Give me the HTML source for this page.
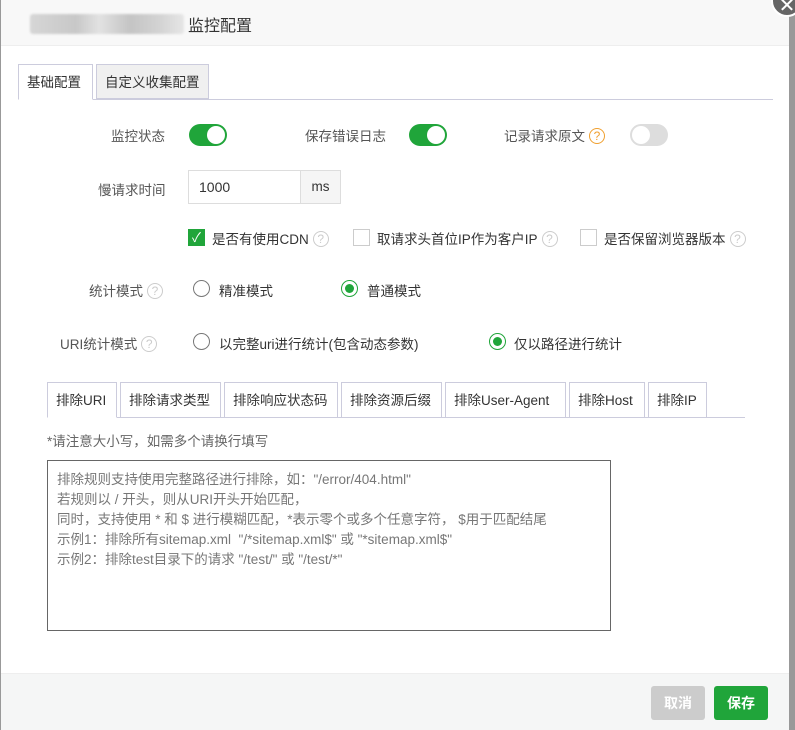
<!DOCTYPE html>
<html><head><meta charset="utf-8"><style>
*{box-sizing:border-box;margin:0;padding:0}
body{width:795px;height:730px;overflow:hidden;background:#999;font-family:"Liberation Sans","Noto Sans CJK SC",sans-serif;font-size:13.5px;color:#555;position:relative}
.dlg{position:absolute;left:1px;top:0;width:788px;height:730px;background:#fff}
.hd{height:46px;background:#f8f8f8;border-bottom:1px solid #eee;position:relative}
.blur{position:absolute;left:29px;top:14px;width:154px;height:20px;background:linear-gradient(90deg,#d6d6d6,#c8c8c8 30%,#e2e2e2 45%,#c4c4c4 65%,#d4d4d4 85%,#e6e6e6);filter:blur(1px);border-radius:3px}
.hd .t{position:absolute;left:187px;top:12px;font-size:16px;color:#333}
.close{position:absolute;left:771px;top:-15px;width:32px;height:32px;border-radius:50%;background:#666;border:2px solid #fff;color:#fff;font-size:20px;text-align:center;line-height:38px}
.a{position:absolute;white-space:nowrap}
.tab1{position:absolute;top:64px;height:36px;border:1px solid #ccd;padding:0 8px;line-height:36px;font-size:13.5px;color:#333}
.sw{position:absolute;width:38px;height:22px;border-radius:11px;background:#20a53a}
.sw::after{content:"";position:absolute;top:2px;right:2px;width:18px;height:18px;border-radius:50%;background:#fff}
.sw.off{background:#ddd}.sw.off::after{left:2px;right:auto}
.q{display:inline-block;width:16px;height:16px;border:1px solid #ccc;border-radius:50%;font-size:12px;line-height:14px;text-align:center;color:#ccc;vertical-align:middle;margin-left:4px;margin-top:-3px}
.cb{position:absolute;width:17px;height:17px;border:1px solid #ccc;background:#fff}
.cb.on{background:#20a53a;border-color:#20a53a;color:#fff;font-size:13px;line-height:15px;text-align:center}
.rd{position:absolute;width:17px;height:17px;border:1px solid #777;border-radius:50%}
.rd.on{border-color:#20a53a}.rd.on::after{content:"";position:absolute;left:3px;top:3px;width:9px;height:9px;border-radius:50%;background:#20a53a}
.t2{position:absolute;top:382px;height:36px;border:1px solid #ccd;line-height:36px;padding:0 8px;color:#333;font-size:13.5px;background:#fff}
.ft{position:absolute;left:0;top:673px;width:788px;height:57px;background:#f5f6f6;border-top:1px solid #eee}
.btn{position:absolute;top:686px;height:34px;border-radius:3px;color:#fff;font-weight:bold;font-size:14px;line-height:34px;text-align:center}
</style></head><body>
<div class="dlg">
<div class="hd"><div class="blur"></div><div class="t">监控配置</div></div>
<div style="position:absolute;left:17px;top:99px;width:755px;height:1px;background:#ccd"></div>
<div class="tab1" style="left:17px;width:75px;border-bottom-color:#fff;background:#fff">基础配置</div>
<div class="tab1" style="left:95px;width:113px;background:#f0f0f0;height:35px">自定义收集配置</div>

<div class="a" style="left:110px;top:125px">监控状态</div>
<div class="sw" style="left:188px;top:124px"></div>
<div class="a" style="left:304px;top:125px">保存错误日志</div>
<div class="sw" style="left:408px;top:124px"></div>
<div class="a" style="left:503px;top:125px">记录请求原文<span class="q" style="border-color:#f0a030;color:#f0a030">?</span></div>
<div class="sw off" style="left:629px;top:124px"></div>

<div class="a" style="left:97px;top:179px">慢请求时间</div>
<div style="position:absolute;left:187px;top:170px;width:113px;height:34px;border:1px solid #ddd;padding:8px 10px;color:#333;font-size:14px">1000</div>
<div style="position:absolute;left:299px;top:170px;width:41px;height:34px;border:1px solid #ddd;background:#f5f5f5;text-align:center;line-height:32px;color:#333">ms</div>

<div class="cb on" style="left:187px;top:229px">✓</div>
<div class="a" style="left:211px;top:228px;color:#333">是否有使用CDN<span class="q">?</span></div>
<div class="cb" style="left:352px;top:229px"></div>
<div class="a" style="left:376px;top:228px;color:#333">取请求头首位IP作为客户IP<span class="q">?</span></div>
<div class="cb" style="left:579px;top:229px"></div>
<div class="a" style="left:603px;top:228px;color:#333">是否保留浏览器版本<span class="q">?</span></div>

<div class="a" style="left:88px;top:280px">统计模式<span class="q">?</span></div>
<div class="rd" style="left:192px;top:280px"></div>
<div class="a" style="left:218px;top:280px;color:#333">精准模式</div>
<div class="rd on" style="left:340px;top:280px"></div>
<div class="a" style="left:366px;top:280px;color:#333">普通模式</div>

<div class="a" style="left:59px;top:333px">URI统计模式<span class="q">?</span></div>
<div class="rd" style="left:192px;top:333px"></div>
<div class="a" style="left:218px;top:333px;color:#333">以完整uri进行统计(包含动态参数)</div>
<div class="rd on" style="left:488px;top:333px"></div>
<div class="a" style="left:513px;top:333px;color:#333">仅以路径进行统计</div>

<div style="position:absolute;left:46px;top:417px;width:698px;height:1px;background:#ccd"></div>
<div class="t2" style="left:46px;width:70px;border-bottom-color:#fff">排除URI</div>
<div class="t2" style="left:119px;width:101px">排除请求类型</div>
<div class="t2" style="left:223px;width:114px">排除响应状态码</div>
<div class="t2" style="left:340px;width:101px">排除资源后缀</div>
<div class="t2" style="left:444px;width:121px">排除User-Agent</div>
<div class="t2" style="left:568px;width:76px">排除Host</div>
<div class="t2" style="left:647px;width:59px">排除IP</div>

<div class="a" style="left:46px;top:430px;color:#666">*请注意大小写，如需多个请换行填写</div>
<div style="position:absolute;left:46px;top:460px;width:564px;height:171px;border:1px solid #666;padding:9px 9px;color:#777;font-size:13.5px;line-height:20px">排除规则支持使用完整路径进行排除，如："/error/404.html"<br>若规则以 / 开头，则从URI开头开始匹配，<br>同时，支持使用 * 和 $ 进行模糊匹配，*表示零个或多个任意字符， $用于匹配结尾<br>示例1：排除所有sitemap.xml &nbsp;"/*sitemap.xml$" 或 "*sitemap.xml$"<br>示例2：排除test目录下的请求 "/test/" 或 "/test/*"</div>

<div class="ft"></div>
<div class="btn" style="left:650px;width:54px;background:#ccc">取消</div>
<div class="btn" style="left:713px;width:54px;background:#20a53a">保存</div>
</div>
<div class="close">✕</div>
</body></html>
